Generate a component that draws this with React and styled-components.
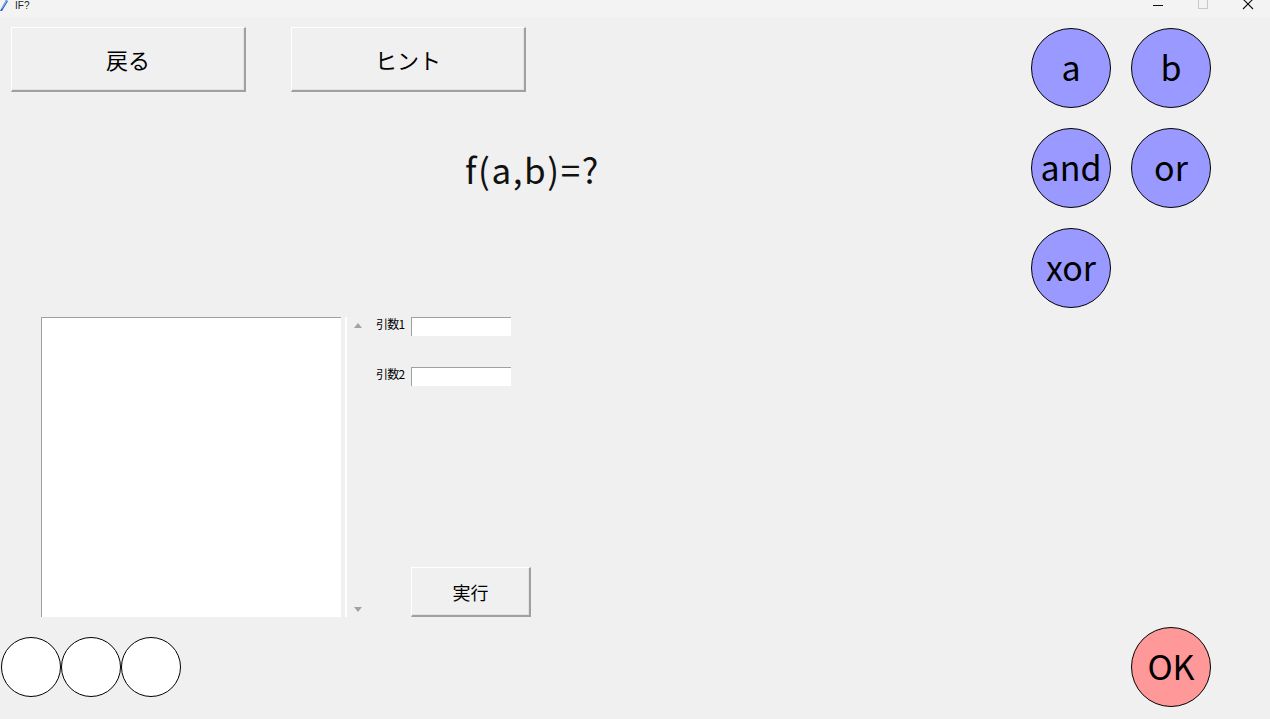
import React from "react";
import styled, { createGlobalStyle } from "styled-components";

const Global = createGlobalStyle`
  html, body { margin: 0; padding: 0; background: #f0f0f0; }
  body { font-family: "Noto Sans CJK JP", "Noto Sans", sans-serif; overflow: hidden; }
  * { box-sizing: border-box; }
`;

const Page = styled.div`
  width: 1270px;
  height: 719px;
  display: flex;
  flex-direction: column;
  background: #f0f0f0;
  overflow: hidden;
`;

const TitleBar = styled.div`
  height: 17px;
  flex: none;
  background: #f3f3f3;
  display: flex;
  align-items: flex-start;
`;

const AppIcon = styled.svg`
  width: 8px;
  height: 12px;
  flex: none;
`;

const Title = styled.span`
  font-family: "Liberation Sans", sans-serif;
  font-size: 10px;
  line-height: 12px;
  color: #222;
  margin-left: 7px;
  margin-top: 0;
`;

const WinControls = styled.div`
  margin-left: auto;
  display: flex;
  align-items: flex-start;
`;

const WinButton = styled.div`
  width: 45px;
  height: 17px;
  display: flex;
  justify-content: center;
  align-items: flex-start;
`;

const Content = styled.div`
  flex: 1;
  display: flex;
  flex-direction: column;
`;

const Upper = styled.div`
  height: 620px;
  flex: none;
  display: flex;
`;

const LeftPane = styled.div`
  flex: 1;
  padding: 10px 0 0 11px;
  display: flex;
  flex-direction: column;
`;

const ButtonRow = styled.div`
  display: flex;
  gap: 45px;
`;

const RaisedButton = styled.button`
  width: ${(p) => p.$w}px;
  height: ${(p) => p.$h}px;
  background: #f0f0f0;
  border: none;
  border-top: 1px solid #ffffff;
  border-left: 1px solid #ffffff;
  border-right: 2px solid #a0a0a0;
  border-bottom: 2px solid #a0a0a0;
  box-shadow: inset -1px -1px 0 #e3e3e3;
  font-family: "Noto Sans CJK JP", sans-serif;
  font-size: ${(p) => p.$fs}px;
  color: #000;
  padding: 0;
  display: flex;
  align-items: center;
  justify-content: center;
  line-height: 1;
`;

const Formula = styled.div`
  margin-top: 52px;
  margin-left: 454px;
  height: 50px;
  font-family: "Noto Sans CJK JP", sans-serif;
  font-size: 35px;
  line-height: 50px;
  color: #111;
  letter-spacing: 1.6px;
`;

const WorkArea = styled.div`
  margin-top: 123px;
  margin-left: 30px;
  display: flex;
  align-items: flex-start;
`;

const ListBox = styled.div`
  width: 300px;
  height: 300px;
  background: #fff;
  border-top: 1px solid #a0a0a0;
  border-left: 1px solid #a0a0a0;
`;

const ScrollBar = styled.div`
  width: 20px;
  height: 300px;
  margin-left: 4px;
  border-left: 2px solid #fff;
  display: flex;
  flex-direction: column;
  justify-content: space-between;
  align-items: center;
  padding: 6px 0 5px 4px;
`;

const Arrow = styled.div`
  width: 0;
  height: 0;
  border-left: 4px solid transparent;
  border-right: 4px solid transparent;
  ${(p) =>
    p.$down
      ? "border-top: 5px solid #a3a3a3;"
      : "border-bottom: 5px solid #a3a3a3;"}
`;

const SideForm = styled.div`
  margin-left: 11px;
  height: 300px;
  display: flex;
  flex-direction: column;
`;

const ArgRow = styled.div`
  display: flex;
  align-items: flex-start;
  margin-bottom: 31px;
`;

const ArgLabel = styled.span`
  width: 35px;
  font-family: "Noto Sans CJK JP", sans-serif;
  font-size: 12px;
  line-height: 14px;
  color: #000;
  letter-spacing: -0.8px;
`;

const ArgInput = styled.input`
  width: 100px;
  height: 19px;
  background: #fff;
  border: none;
  border-top: 1px solid #a0a0a0;
  border-left: 1px solid #a0a0a0;
  outline: none;
  padding: 0 2px;
`;

const RunWrap = styled.div`
  margin-top: auto;
  margin-left: 35px;
`;

const RightPane = styled.div`
  padding-top: 11px;
  margin-right: 59px;
`;

const CircleGrid = styled.div`
  display: grid;
  grid-template-columns: 80px 80px;
  gap: 20px;
`;

const Circle = styled.div`
  width: ${(p) => p.$size}px;
  height: ${(p) => p.$size}px;
  border-radius: 50%;
  background: ${(p) => p.$bg};
  border: 1px solid #000;
  display: flex;
  align-items: center;
  justify-content: center;
  font-family: "Noto Sans CJK JP", sans-serif;
  font-size: 34px;
  color: #000;
  line-height: 1;
  padding-bottom: 3px;
`;

const BottomRow = styled.div`
  height: 60px;
  display: flex;
  align-items: center;
  padding-left: 1px;
  padding-right: 59px;
`;

const Slots = styled.div`
  display: flex;
`;

const OkWrap = styled.div`
  margin-left: auto;
`;

export default function App() {
  return (
    <Page>
      <Global />
      <TitleBar>
        <AppIcon viewBox="0 0 8 12">
          <path d="M6 0 L8 1 L2 11 L0 11 Z" fill="#2a5fb0" />
          <path d="M6 0 L7 1 L2 9 L1 9 Z" fill="#7fb2ff" />
        </AppIcon>
        <Title>IF?</Title>
        <WinControls>
          <WinButton>
            <svg width="12" height="12" viewBox="0 0 12 12">
              <line x1="1" y1="5.5" x2="11" y2="5.5" stroke="#111" strokeWidth="1" />
            </svg>
          </WinButton>
          <WinButton>
            <svg width="12" height="10" viewBox="0 0 12 10">
              <rect x="1.5" y="-1" width="9" height="9.5" fill="none" stroke="#c8c8c8" strokeWidth="1" />
            </svg>
          </WinButton>
          <WinButton>
            <svg width="12" height="10" viewBox="0 0 12 10">
              <path d="M1 -1 L11 9 M11 -1 L1 9" stroke="#111" strokeWidth="1.1" />
            </svg>
          </WinButton>
        </WinControls>
      </TitleBar>
      <Content>
        <Upper>
          <LeftPane>
            <ButtonRow>
              <RaisedButton $w={235} $h={65} $fs={22}>戻る</RaisedButton>
              <RaisedButton $w={235} $h={65} $fs={22}>ヒント</RaisedButton>
            </ButtonRow>
            <Formula>f(a,b)=?</Formula>
            <WorkArea>
              <ListBox />
              <ScrollBar>
                <Arrow />
                <Arrow $down />
              </ScrollBar>
              <SideForm>
                <ArgRow>
                  <ArgLabel>引数1</ArgLabel>
                  <ArgInput />
                </ArgRow>
                <ArgRow>
                  <ArgLabel>引数2</ArgLabel>
                  <ArgInput />
                </ArgRow>
                <RunWrap>
                  <RaisedButton $w={120} $h={50} $fs={18}>実行</RaisedButton>
                </RunWrap>
              </SideForm>
            </WorkArea>
          </LeftPane>
          <RightPane>
            <CircleGrid>
              <Circle $size={80} $bg="#9999ff">a</Circle>
              <Circle $size={80} $bg="#9999ff">b</Circle>
              <Circle $size={80} $bg="#9999ff">and</Circle>
              <Circle $size={80} $bg="#9999ff">or</Circle>
              <Circle $size={80} $bg="#9999ff">xor</Circle>
            </CircleGrid>
          </RightPane>
        </Upper>
        <BottomRow>
          <Slots>
            <Circle $size={60} $bg="#ffffff" />
            <Circle $size={60} $bg="#ffffff" />
            <Circle $size={60} $bg="#ffffff" />
          </Slots>
          <OkWrap>
            <Circle $size={80} $bg="#ff9999">OK</Circle>
          </OkWrap>
        </BottomRow>
      </Content>
    </Page>
  );
}
